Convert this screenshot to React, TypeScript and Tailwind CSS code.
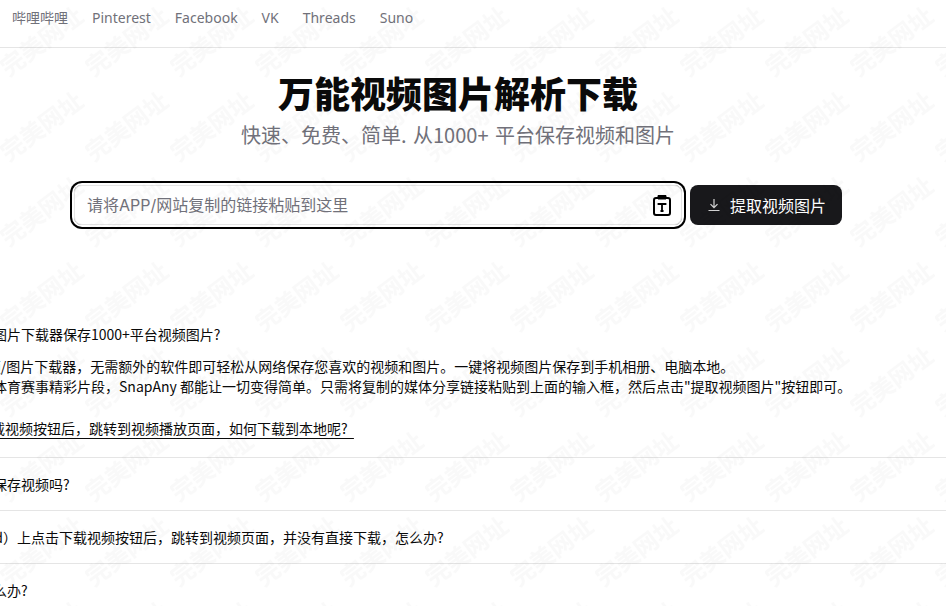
import { useId } from "react";

const navLinks = ["哔哩哔哩", "Pinterest", "Facebook", "VK", "Threads", "Suno"];

const collapsedRows = [
  "能在苹果上保存视频吗?",
  "在\uFF08Android\uFF09上点击下载视频按钮后\uFF0C跳转到视频页面\uFF0C并没有直接下载\uFF0C怎么办?",
  "下载失败怎么办?",
];

const answerLines = [
  "1款免费视频/图片下载器\uFF0C无需额外的软件即可轻松从网络保存您喜欢的视频和图片。一键将视频图片保存到手机相册、电脑本地。",
  "无论短剧或体育赛事精彩片段\uFF0CSnapAny 都能让一切变得简单。只需将复制的媒体分享链接粘贴到上面的输入框\uFF0C然后点击\"提取视频图片\"按钮即可。",
];

const Watermark = () => {
  const id = useId();
  return (
    <svg className="pointer-events-none absolute inset-0 h-full w-full" aria-hidden="true">
      <defs>
        <pattern id={id} width="85" height="85" patternUnits="userSpaceOnUse">
          <text
            x="42"
            y="50"
            textAnchor="middle"
            fontSize="24"
            fontWeight="700"
            fontFamily="'Noto Sans CJK SC', sans-serif"
            fill="#000"
            fillOpacity="0.022"
            transform="rotate(-37 42 42)"
          >
            完美网址
          </text>
        </pattern>
      </defs>
      <rect width="100%" height="100%" fill={`url(#${id})`} />
    </svg>
  );
};

const ClipboardIcon = () => (
  <svg
    className="absolute right-[10px] top-[9px] h-[22px] w-[20px]"
    viewBox="0 0 20 22"
    fill="none"
    stroke="#000"
    strokeWidth="2"
  >
    <path d="M6 4H4A2 2 0 0 0 2 6V19A2 2 0 0 0 4 21H16A2 2 0 0 0 18 19V6A2 2 0 0 0 16 4H14" />
    <path d="M6 1.500H14V5H6Z" fill="#000" strokeWidth="1" />
    <path d="M6.500 11V10H13.500V11M10 10V17M8.500 17H11.500" strokeWidth="1.800" />
  </svg>
);

const DownloadIcon = () => (
  <svg className="h-4 w-4" viewBox="0 0 16 16" fill="none" stroke="#d4d4d4" strokeWidth="1.200">
    <path d="M8 2V10.500M4.500 7.200L8 10.700L11.500 7.200M2.500 13.500H13.500" />
  </svg>
);

export default function App() {
  return (
    <div className="relative h-screen overflow-hidden bg-white font-['Noto_Sans_CJK_SC',sans-serif] text-[#0a0a0a]">
      {/* top nav */}
      <nav className="flex h-12 gap-6 border-b border-[#e5e5e5] px-3 pt-2 font-['Noto_Sans','Noto_Sans_CJK_SC',sans-serif] text-sm text-[#71717a]">
        {navLinks.map((link) => (
          <a key={link} href="#">
            {link}
          </a>
        ))}
      </nav>

      {/* hero */}
      <section className="flex w-[916px] flex-col items-center pt-6">
        <h1 className="text-4xl font-black">万能视频图片解析下载</h1>
        <p className="mt-[9px] text-xl text-[#71717a] [word-spacing:2px]">快速、免费、简单. 从1000+ 平台保存视频和图片</p>
        <div className="mt-9 flex w-3xl gap-2">
          <div className="relative flex-1">
            <input
              className="h-10 w-full rounded-lg border border-[#e5e5e5] bg-transparent px-3 font-['Inter','Noto_Sans_CJK_SC',sans-serif] text-base outline-none ring-2 ring-black ring-offset-2 placeholder:text-[#71717a]"
              placeholder="请将APP/网站复制的链接粘贴到这里"
            />
            <ClipboardIcon />
          </div>
          <button className="flex h-10 items-center gap-2 rounded-lg bg-[#18181b] px-4 text-base text-white">
            <DownloadIcon />
            提取视频图片
          </button>
        </div>
      </section>

      {/* faq */}
      <section className="mt-[99px] text-sm">
        <div className="border-b border-[#e5e5e5] pb-[19px]">
          <h2 className="-ml-[77px]">如何用免费图片下载器保存1000+平台视频图片?</h2>
          <div className="mt-3 -ml-[77px] whitespace-nowrap">
            {answerLines.map((line) => (
              <p key={line}>{line}</p>
            ))}
          </div>
          <a href="#" className="mt-[22px] -ml-[79px] block whitespace-pre underline underline-offset-4">
            {"当我点击下载视频按钮后\uFF0C跳转到视频播放页面\uFF0C如何下载到本地呢?\u00A0\u00A0"}
          </a>
        </div>
        {collapsedRows.map((row) => (
          <div key={row} className="whitespace-nowrap border-b border-[#e5e5e5] py-4">
            <div className="-ml-[77px]">{row}</div>
          </div>
        ))}
      </section>

      <Watermark />
    </div>
  );
}
